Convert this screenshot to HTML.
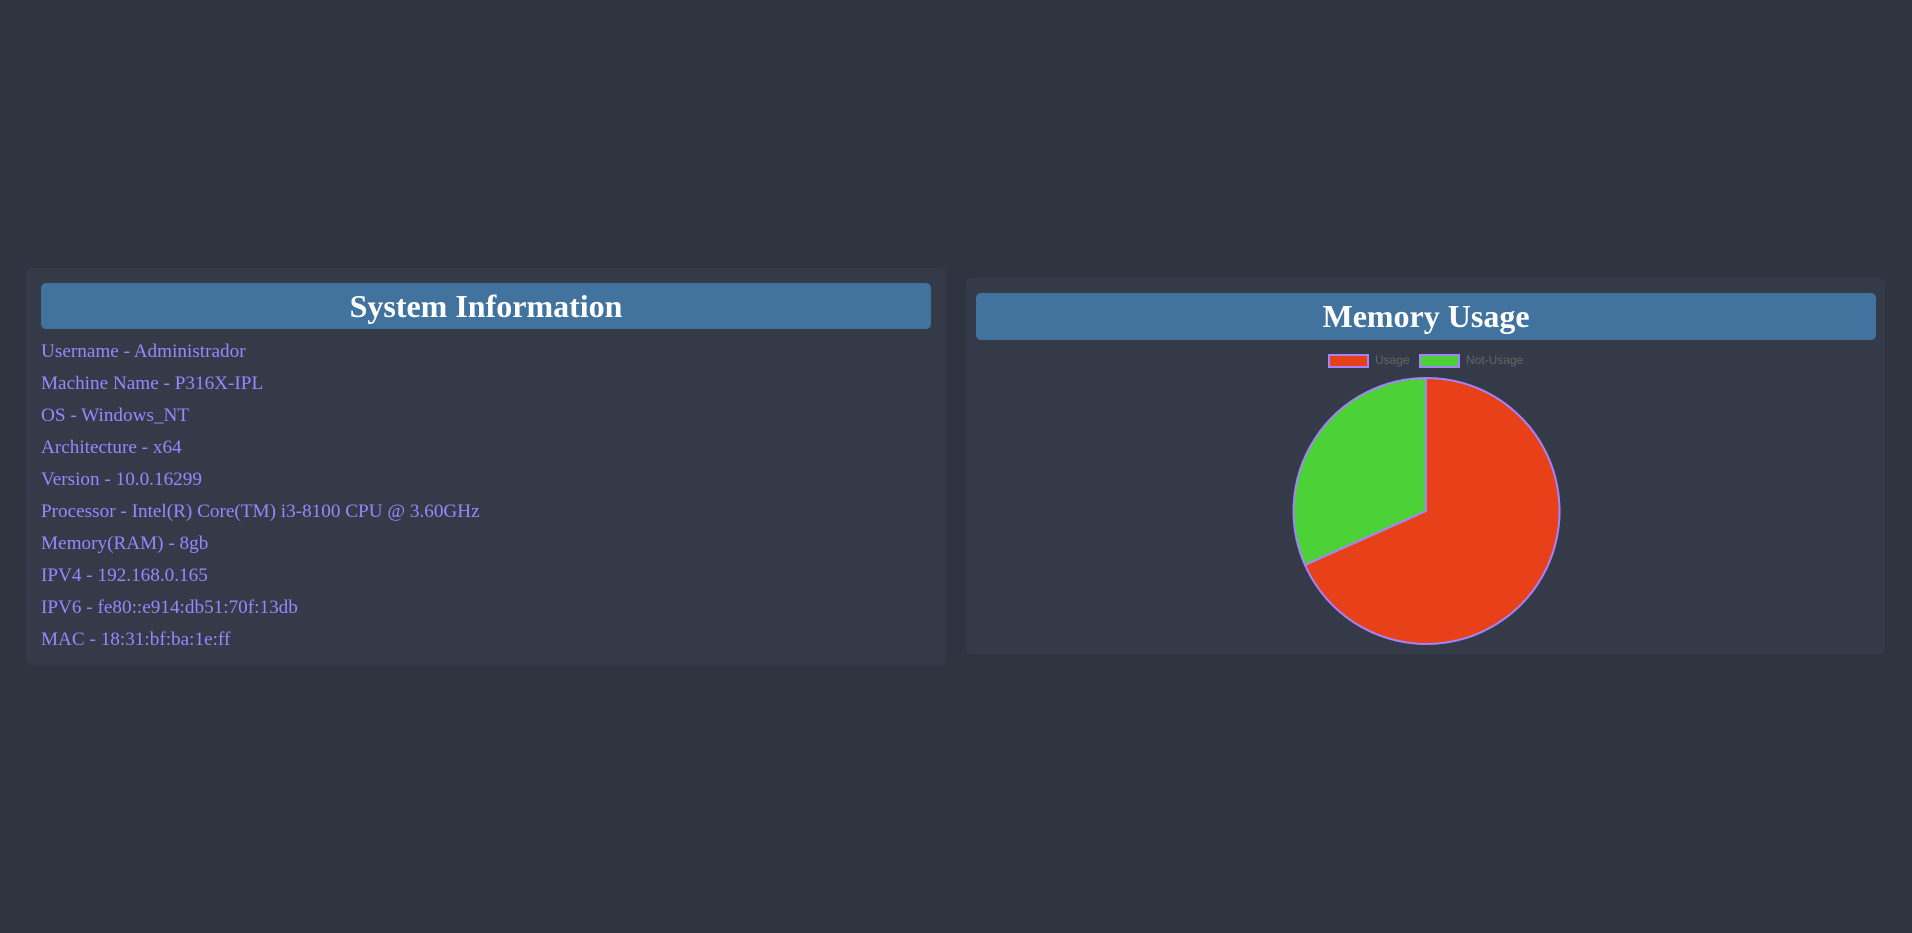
<!DOCTYPE html>
<html><head><meta charset="utf-8">
<style>
html,body{margin:0;padding:0;width:1912px;height:933px;background:#2f3540;overflow:hidden;font-family:"Liberation Serif",serif;}
.card{position:absolute;background:#353a48;border-radius:5px;}
.hdr{position:absolute;background:#41739e;border-radius:5px;color:#fff;font-weight:bold;font-size:32px;text-align:center;line-height:47px;}
.line{position:absolute;left:41px;color:#9588ff;font-size:19.2px;line-height:22px;white-space:nowrap;}
.leg{position:absolute;font-family:"Liberation Sans",sans-serif;font-size:12px;color:#666;line-height:14px;}
.box{position:absolute;width:37px;height:10px;border:2px solid #a583ff;}
</style></head><body>
<div class="card" style="left:26px;top:268px;width:920px;height:397px;"></div>
<div class="hdr" style="left:41px;top:283px;width:890px;height:46px;">System Information</div>
<div class="line" style="top:341px">Username - Administrador</div>
<div class="line" style="top:373px">Machine Name - P316X-IPL</div>
<div class="line" style="top:405px">OS - Windows_NT</div>
<div class="line" style="top:437px">Architecture - x64</div>
<div class="line" style="top:469px">Version - 10.0.16299</div>
<div class="line" style="top:501px">Processor - Intel(R) Core(TM) i3-8100 CPU @ 3.60GHz</div>
<div class="line" style="top:533px">Memory(RAM) - 8gb</div>
<div class="line" style="top:565px">IPV4 - 192.168.0.165</div>
<div class="line" style="top:597px">IPV6 - fe80::e914:db51:70f:13db</div>
<div class="line" style="top:629px">MAC - 18:31:bf:ba:1e:ff</div>

<div class="card" style="left:966px;top:278px;width:919px;height:376px;"></div>
<div class="hdr" style="left:976px;top:293px;width:900px;height:47px;">Memory Usage</div>
<div class="box" style="left:1328px;top:354px;background:#e8411a;"></div>
<div class="leg" style="left:1375px;top:353px;">Usage</div>
<div class="box" style="left:1419px;top:354px;background:#4cd137;"></div>
<div class="leg" style="left:1466px;top:353px;">Not-Usage</div>
<svg style="position:absolute;left:0;top:0" width="1912" height="933">
<path d="M1426 511 L1426 378 A133 133 0 1 1 1305 565 Z" fill="#e8411a" stroke="#a583ff" stroke-width="2"/>
<path d="M1426 511 L1305 565 A133 133 0 0 1 1426 378 Z" fill="#4cd137" stroke="#a583ff" stroke-width="2"/>
</svg>
</body></html>
